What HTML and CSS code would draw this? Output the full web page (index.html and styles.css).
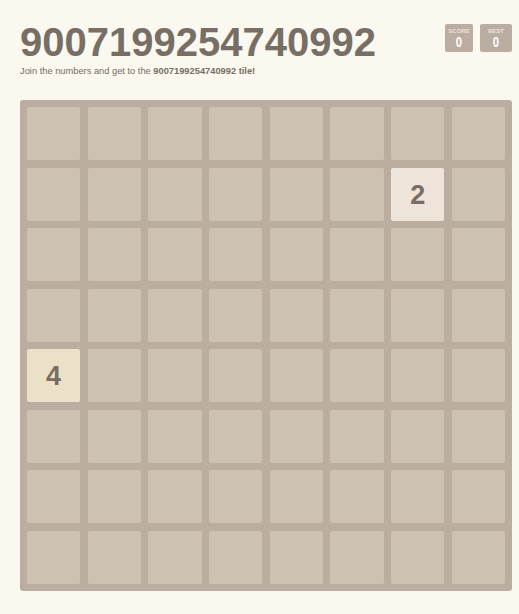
FILE: index.html
```html
<!DOCTYPE html>
<html>
<head>
<meta charset="utf-8">
<link rel="stylesheet" href="styles.css">
</head>
<body>
<div class="container">
  <div class="heading">
    <h1 class="title">9007199254740992</h1>
    <div class="scores">
      <div class="score-box"><span class="label">SCORE</span><span class="value">0</span></div>
      <div class="score-box best"><span class="label">BEST</span><span class="value">0</span></div>
    </div>
  </div>
  <p class="intro">Join the numbers and get to the <strong>9007199254740992 tile!</strong></p>
  <div class="board">
    <div class="cell"></div><div class="cell"></div><div class="cell"></div><div class="cell"></div><div class="cell"></div><div class="cell"></div><div class="cell"></div><div class="cell"></div>
    <div class="cell"></div><div class="cell"></div><div class="cell"></div><div class="cell"></div><div class="cell"></div><div class="cell"></div><div class="cell tile-2">2</div><div class="cell"></div>
    <div class="cell"></div><div class="cell"></div><div class="cell"></div><div class="cell"></div><div class="cell"></div><div class="cell"></div><div class="cell"></div><div class="cell"></div>
    <div class="cell"></div><div class="cell"></div><div class="cell"></div><div class="cell"></div><div class="cell"></div><div class="cell"></div><div class="cell"></div><div class="cell"></div>
    <div class="cell tile-4">4</div><div class="cell"></div><div class="cell"></div><div class="cell"></div><div class="cell"></div><div class="cell"></div><div class="cell"></div><div class="cell"></div>
    <div class="cell"></div><div class="cell"></div><div class="cell"></div><div class="cell"></div><div class="cell"></div><div class="cell"></div><div class="cell"></div><div class="cell"></div>
    <div class="cell"></div><div class="cell"></div><div class="cell"></div><div class="cell"></div><div class="cell"></div><div class="cell"></div><div class="cell"></div><div class="cell"></div>
    <div class="cell"></div><div class="cell"></div><div class="cell"></div><div class="cell"></div><div class="cell"></div><div class="cell"></div><div class="cell"></div><div class="cell"></div>
  </div>
</div>
</body>
</html>
```
FILE: styles.css
```css
html, body {
  margin: 0;
  padding: 0;
  background: #faf8ef;
  color: #776e65;
  font-family: "Liberation Sans", Arial, sans-serif;
}
.container {
  width: 492px;
  margin-left: 20px;
  padding-top: 22px;
}
.heading {
  display: flex;
  justify-content: space-between;
  align-items: flex-start;
}
.title {
  margin: 0;
  font-size: 40px;
  line-height: 40px;
  font-weight: bold;
  color: #776e65;
}
.scores {
  display: flex;
  gap: 7px;
  margin-top: 2px;
}
.score-box {
  width: 28px;
  height: 28px;
  background: #bbada0;
  border-radius: 2px;
  display: flex;
  flex-direction: column;
  align-items: center;
  box-sizing: border-box;
  padding-top: 4px;
}
.score-box.best {
  width: 32px;
}
.label {
  font-size: 6px;
  line-height: 7px;
  font-weight: bold;
  color: #eee4da;
}
.value {
  font-size: 14px;
  line-height: 14px;
  font-weight: bold;
  color: #ffffff;
  transform: scaleX(0.8);
}
.intro {
  margin: 3px 0 0 0;
  font-size: 9.3px;
  line-height: 12px;
  color: #776e65;
}
.board {
  margin-top: 23px;
  width: 492px;
  height: 491px;
  box-sizing: border-box;
  padding: 7px;
  background: #bbada0;
  border-radius: 3px;
  display: grid;
  grid-template-columns: repeat(8, 1fr);
  grid-template-rows: repeat(8, 1fr);
  gap: 7.6px;
}
.cell {
  background: #cdc1b4;
  border-radius: 2px;
  display: flex;
  align-items: center;
  justify-content: center;
  font-weight: bold;
  font-size: 27px;
  color: #776e65;
  padding-top: 2px;
  box-sizing: border-box;
}
.tile-2 {
  background: #eee4da;
}
.tile-4 {
  background: #ede0c8;
}
```
